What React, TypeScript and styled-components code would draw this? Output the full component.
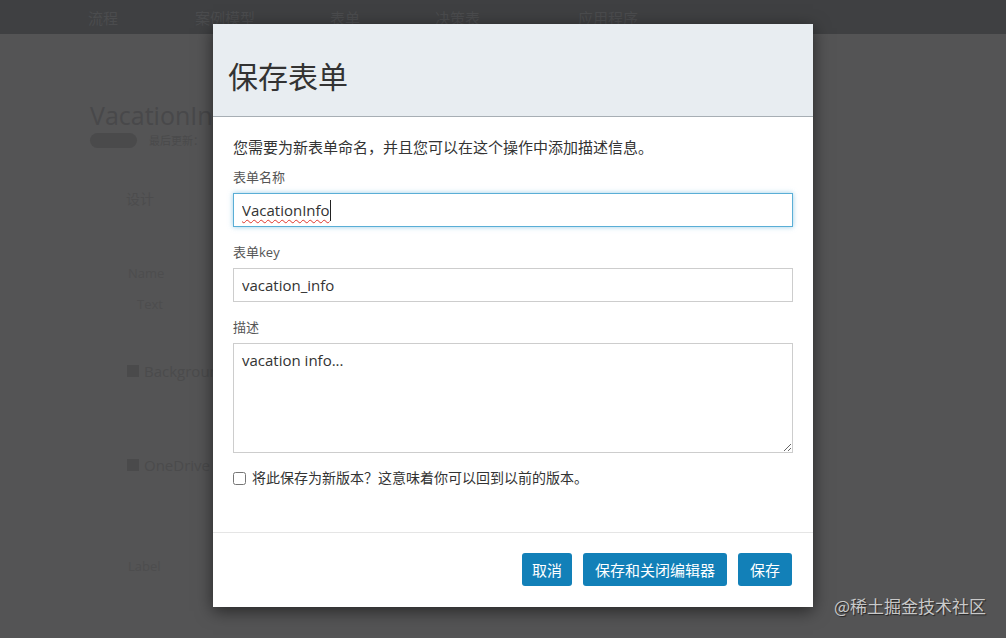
import * as React from "react";
import styled, { createGlobalStyle } from "styled-components";

const GlobalStyle = createGlobalStyle`
  html, body {
    margin: 0;
    padding: 0;
    width: 100%;
    height: 100%;
    overflow: hidden;
    background: #545455;
    font-family: "Open Sans", "Noto Sans CJK SC", sans-serif;
  }
  #root {
    height: 100%;
  }
  * {
    box-sizing: border-box;
  }
`;

const colors = {
  primary: "#1280b8",
  text: "#333",
  label: "#555",
  dimText: "#4a4a4b",
};

const navItems = ["流程", "案例模型", "表单", "决策表", "应用程序"];

const App: React.FC = () => {
  return (
    <Page>
      <GlobalStyle />
      <TopBar>
        {navItems.map((item) => (
          <NavItem key={item}>{item}</NavItem>
        ))}
      </TopBar>
      <Backdrop>
        <PageTitle>VacationIn</PageTitle>
        <MetaRow>
          <Badge>v1</Badge>
          <span>最后更新：</span>
        </MetaRow>
        <Section>设计</Section>
        <FieldTitle>Name</FieldTitle>
        <FieldValue>Text</FieldValue>
        <IconRow>
          <Square />
          Background
        </IconRow>
        <IconRow>
          <Square />
          OneDrive
        </IconRow>
        <FieldTitle>Label</FieldTitle>
      </Backdrop>

      <Modal>
        <ModalHeader>
          <ModalTitle>保存表单</ModalTitle>
        </ModalHeader>
        <ModalBody>
          <Intro>您需要为新表单命名，并且您可以在这个操作中添加描述信息。</Intro>
          <Label>表单名称</Label>
          <InputWrap>
            <Input focused defaultValue="VacationInfo" />
            {/* spell-check squiggle and caret drawn over the focused field */}
            <Squiggle>VacationInfo</Squiggle>
          </InputWrap>
          <Label>表单key</Label>
          <Input defaultValue="vacation_info" />
          <Label>描述</Label>
          <TextArea defaultValue="vacation info..." />
          <CheckRow>
            <input type="checkbox" />
            将此保存为新版本？这意味着你可以回到以前的版本。
          </CheckRow>
        </ModalBody>
        <ModalFooter>
          <Button compact>取消</Button>
          <Button>保存和关闭编辑器</Button>
          <Button>保存</Button>
        </ModalFooter>
      </Modal>

      <Watermark>@稀土掘金技术社区</Watermark>
    </Page>
  );
};

export default App;

const Page = styled.div`
  position: relative;
  width: 100%;
  height: 100%;
  background: #545455;
`;

const TopBar = styled.div`
  display: flex;
  align-items: center;
  height: 34px;
  padding-left: 88px;
  background: #3f4042;
`;

const NavItem = styled.div`
  font-size: 15px;
  color: #4b4c4e;
  &:nth-child(1) { width: 107px; }
  &:nth-child(2) { width: 135px; }
  &:nth-child(3) { width: 105px; }
  &:nth-child(4) { width: 143px; }
`;

const Backdrop = styled.div`
  display: flex;
  flex-direction: column;
  padding: 66px 0 0 90px;
  color: ${colors.dimText};
`;

const PageTitle = styled.div`
  font-size: 25px;
  line-height: 30px;
  color: #48484a;
`;

const MetaRow = styled.div`
  display: flex;
  align-items: center;
  gap: 12px;
  margin-top: 2px;
  font-size: 11px;
  color: #4a4a4b;
`;

const Badge = styled.span`
  display: inline-block;
  width: 47px;
  height: 15px;
  border-radius: 8px;
  background: #4a4a4b;
  color: transparent;
`;

const Section = styled.div`
  margin: 40px 0 0 36px;
  font-size: 14px;
  color: #4c4c4d;
`;

const FieldTitle = styled.div`
  margin: 56px 0 0 38px;
  font-size: 13px;
  color: #4d4d4e;
`;

const FieldValue = styled.div`
  margin: 13px 0 0 47px;
  font-size: 13px;
  color: #4d4d4e;
`;

const IconRow = styled.div`
  display: flex;
  align-items: center;
  gap: 5px;
  margin: 48px 0 26px 37px;
  font-size: 15px;
  color: #4b4b4c;
`;

const Square = styled.span`
  width: 12px;
  height: 12px;
  background: #4a4a4b;
`;

const Modal = styled.div`
  position: absolute;
  top: 24px;
  left: 213px;
  width: 600px;
  display: flex;
  flex-direction: column;
  background: #fff;
  box-shadow: 0 4px 16px rgba(0, 0, 0, 0.55);
`;

const ModalHeader = styled.div`
  padding: 34px 15px 20px;
  background: #e8edf1;
  border-bottom: 1px solid #a7aeb4;
`;

const ModalTitle = styled.h3`
  margin: 0;
  font-size: 30px;
  line-height: 38px;
  font-weight: 400;
  color: #333;
`;

const ModalBody = styled.div`
  display: flex;
  flex-direction: column;
  padding: 20px 20px 44px;
`;

const Intro = styled.p`
  margin: 0;
  font-size: 15px;
  line-height: 20px;
  color: ${colors.text};
`;

const Label = styled.label`
  margin: 10px 0 6px;
  font-size: 13px;
  line-height: 20px;
  color: ${colors.label};
  & ~ & {
    margin-top: 15px;
  }
`;

const InputWrap = styled.div`
  position: relative;
  display: flex;
  flex-direction: column;
`;

const Input = styled.input<{ focused?: boolean }>`
  height: 34px;
  padding: 0 8px;
  font-family: "Open Sans", "Noto Sans CJK SC", sans-serif;
  font-size: 15px;
  color: ${colors.text};
  border: 1px solid ${(p) => (p.focused ? "#5aaed6" : "#cdcdcd")};
  border-radius: 0;
  outline: none;
  box-shadow: ${(p) =>
    p.focused ? "0 0 5px rgba(90, 174, 214, 0.6)" : "none"};
`;

const Squiggle = styled.span`
  position: absolute;
  left: 9px;
  top: 7px;
  height: 21px;
  font-size: 15px;
  line-height: 20px;
  color: transparent;
  pointer-events: none;
  text-decoration: underline wavy #e0342a;
  text-decoration-thickness: 1px;
  text-underline-offset: 3px;
  border-right: 1px solid #222;
`;

const TextArea = styled.textarea`
  height: 110px;
  padding: 6px 8px;
  font-family: "Open Sans", "Noto Sans CJK SC", sans-serif;
  font-size: 15px;
  color: ${colors.text};
  border: 1px solid #cdcdcd;
  border-radius: 0;
  outline: none;
  resize: vertical;
`;

const CheckRow = styled.label`
  display: flex;
  align-items: center;
  gap: 3px;
  margin-top: 15px;
  font-size: 14px;
  line-height: 20px;
  color: ${colors.text};

  input {
    width: 13px;
    height: 13px;
    margin: 0 3px 0 0;
  }
`;

const ModalFooter = styled.div`
  display: flex;
  justify-content: flex-end;
  gap: 11px;
  padding: 20px 21px 21px;
  border-top: 1px solid #e5e5e5;
`;

const Button = styled.button<{ compact?: boolean }>`
  height: 33px;
  padding: 0 ${(p) => (p.compact ? "10px" : "12px")};
  font-family: "Open Sans", "Noto Sans CJK SC", sans-serif;
  font-size: 15px;
  color: #fff;
  background: ${colors.primary};
  border: none;
  border-radius: 3px;
  cursor: pointer;
`;

const Watermark = styled.div`
  position: absolute;
  right: 20px;
  bottom: 20px;
  font-size: 17px;
  color: #c9c9c9;
  text-shadow: 1px 1px 1px rgba(0, 0, 0, 0.6);
  font-family: "Noto Sans CJK SC", sans-serif;
`;
